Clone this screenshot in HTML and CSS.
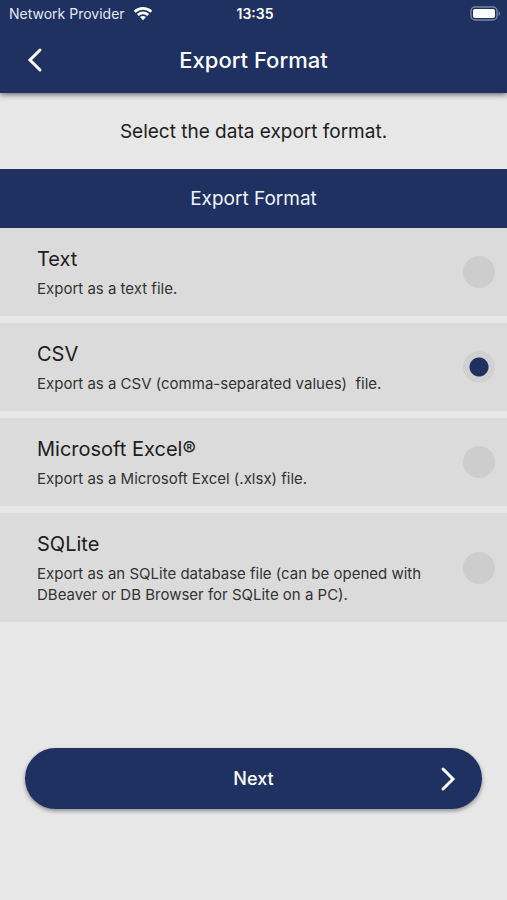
FILE: index.html
```html
<!DOCTYPE html>
<html lang="en">
<head>
<meta charset="utf-8">
<meta name="viewport" content="width=device-width, initial-scale=1">
<title>Export Format</title>
<link rel="stylesheet" href="styles.css">
</head>
<body>
<header class="app-bar">
  <div class="status">
    <div class="carrier">
      <span>Network Provider</span>
      <svg width="20" height="15" viewBox="0 0 20 15" fill="none" stroke="#fff" stroke-width="2.6" aria-hidden="true">
        <path d="M1.7 5.7C6.4 1.2 13.600 1.200 18.300 5.700"/>
        <path d="M4.800 9C7.800 6.200 12.200 6.200 15.200 9"/>
        <path d="M10 14.200 6.900 11.100C8.700 9.500 11.300 9.500 13.100 11.100Z" fill="#fff" stroke="none"/>
      </svg>
    </div>
    <time>13:35</time>
    <div class="battery">
      <svg width="31" height="15" viewBox="0 0 31 15" aria-hidden="true">
        <rect x="1" y="1" width="26" height="13" rx="4" fill="none" stroke="#7885a6" stroke-width="1.400"/>
        <rect x="3" y="3" width="22" height="9" rx="2" fill="#fff"/>
        <path d="M28.500 5.200C30.500 6 30.500 9 28.500 9.800Z" fill="#7885a6"/>
      </svg>
    </div>
  </div>
  <div class="nav">
    <button class="back" type="button" aria-label="Back">
      <svg width="16" height="26" viewBox="0 0 16 26" fill="none" stroke="#fff" stroke-width="3" stroke-linecap="round" aria-hidden="true"><path d="M13 3 3 13 13 23"/></svg>
    </button>
    <h1>Export Format</h1>
  </div>
</header>
<main>
  <p class="intro">Select the data export format.</p>
  <form>
    <h2 id="group-title">Export Format</h2>
    <div class="options" role="radiogroup" aria-labelledby="group-title">
      <label class="option">
        <span class="copy"><span class="name">Text</span><span class="desc">Export as a text file.</span></span>
        <input type="radio" name="format" value="text">
      </label>
      <label class="option">
        <span class="copy"><span class="name">CSV</span><span class="desc">Export as a CSV (comma-separated values)&nbsp; file.</span></span>
        <input type="radio" name="format" value="csv" checked>
      </label>
      <label class="option">
        <span class="copy"><span class="name">Microsoft Excel®</span><span class="desc">Export as a Microsoft Excel (.xlsx) file.</span></span>
        <input type="radio" name="format" value="xlsx">
      </label>
      <label class="option">
        <span class="copy"><span class="name">SQLite</span><span class="desc">Export as an SQLite database file (can be opened with DBeaver or DB Browser for SQLite on a PC).</span></span>
        <input type="radio" name="format" value="sqlite">
      </label>
    </div>
    <button class="next" type="button">
      <span>Next</span>
      <svg width="16" height="26" viewBox="0 0 16 26" fill="none" stroke="#fff" stroke-width="3" stroke-linecap="round" aria-hidden="true"><path d="M3 3 13 13 3 23"/></svg>
    </button>
  </form>
</main>
</body>
</html>
```
FILE: styles.css
```css
* { box-sizing: border-box; }
body {
  margin: 0;
  background: #e7e7e7;
  color: #202020;
  font-family: Inter, "Liberation Sans", sans-serif;
}
button { border: 0; color: inherit; font: inherit; cursor: pointer; }
h1, h2, p { margin: 0; }
.app-bar {
  position: relative;
  background: #1f3160;
  color: #fff;
  box-shadow: 0 2px 5px rgba(0, 0, 0, 0.5);
}
.status {
  display: grid;
  grid-template-columns: 1fr auto 1fr;
  align-items: center;
  height: 26px;
  padding: 0 6px 0 9px;
  font-size: 14px;
}
.status time { font-weight: 600; }
.carrier { display: flex; align-items: center; gap: 8px; color: #e3e8f3; }
.battery { display: flex; justify-content: flex-end; }
.nav {
  display: grid;
  grid-template-columns: 70px 1fr 70px;
  align-items: center;
  height: 67px;
}
.nav h1 { font-size: 22px; font-weight: 500; text-align: center; }
.back {
  display: flex;
  justify-content: center;
  padding: 8px 0;
  background: none;
}
.intro { padding: 25px 16px 23px; font-size: 19px; line-height: 28px; text-align: center; }
h2 {
  padding: 16px 16px 15px;
  background: #1f3160;
  color: #f0f4ff;
  font-size: 19px;
  font-weight: 400;
  line-height: 28px;
  text-align: center;
}
.options { display: grid; gap: 7px; }
.option {
  display: flex;
  align-items: center;
  justify-content: space-between;
  gap: 24px;
  padding: 17px 12px 17px 37px;
  background: #dbdbdb;
  cursor: pointer;
}
.copy { display: grid; gap: 5px; }
.name { font-size: 20px; line-height: 28px; }
.desc { color: #333; font-size: 15px; line-height: 21px; }
input[type="radio"] {
  appearance: none;
  flex: none;
  width: 32px;
  height: 32px;
  margin: 0;
  border-radius: 50%;
  background: #cdcdcd;
}
input[type="radio"]:checked {
  background: radial-gradient(circle, #1f3160 9px, #d1d1d1 10px);
}
.next {
  display: grid;
  grid-template-columns: 1fr auto 1fr;
  align-items: center;
  width: calc(100% - 50px);
  height: 61px;
  margin: 126px 25px 40px;
  padding: 0 26px;
  border-radius: 31px;
  background: #1f3160;
  color: #fff;
  box-shadow: 0 2px 4px rgba(0, 0, 0, 0.4);
  font-size: 18px;
  font-weight: 500;
}
.next span { grid-column: 2; }
.next svg { justify-self: end; }
```
